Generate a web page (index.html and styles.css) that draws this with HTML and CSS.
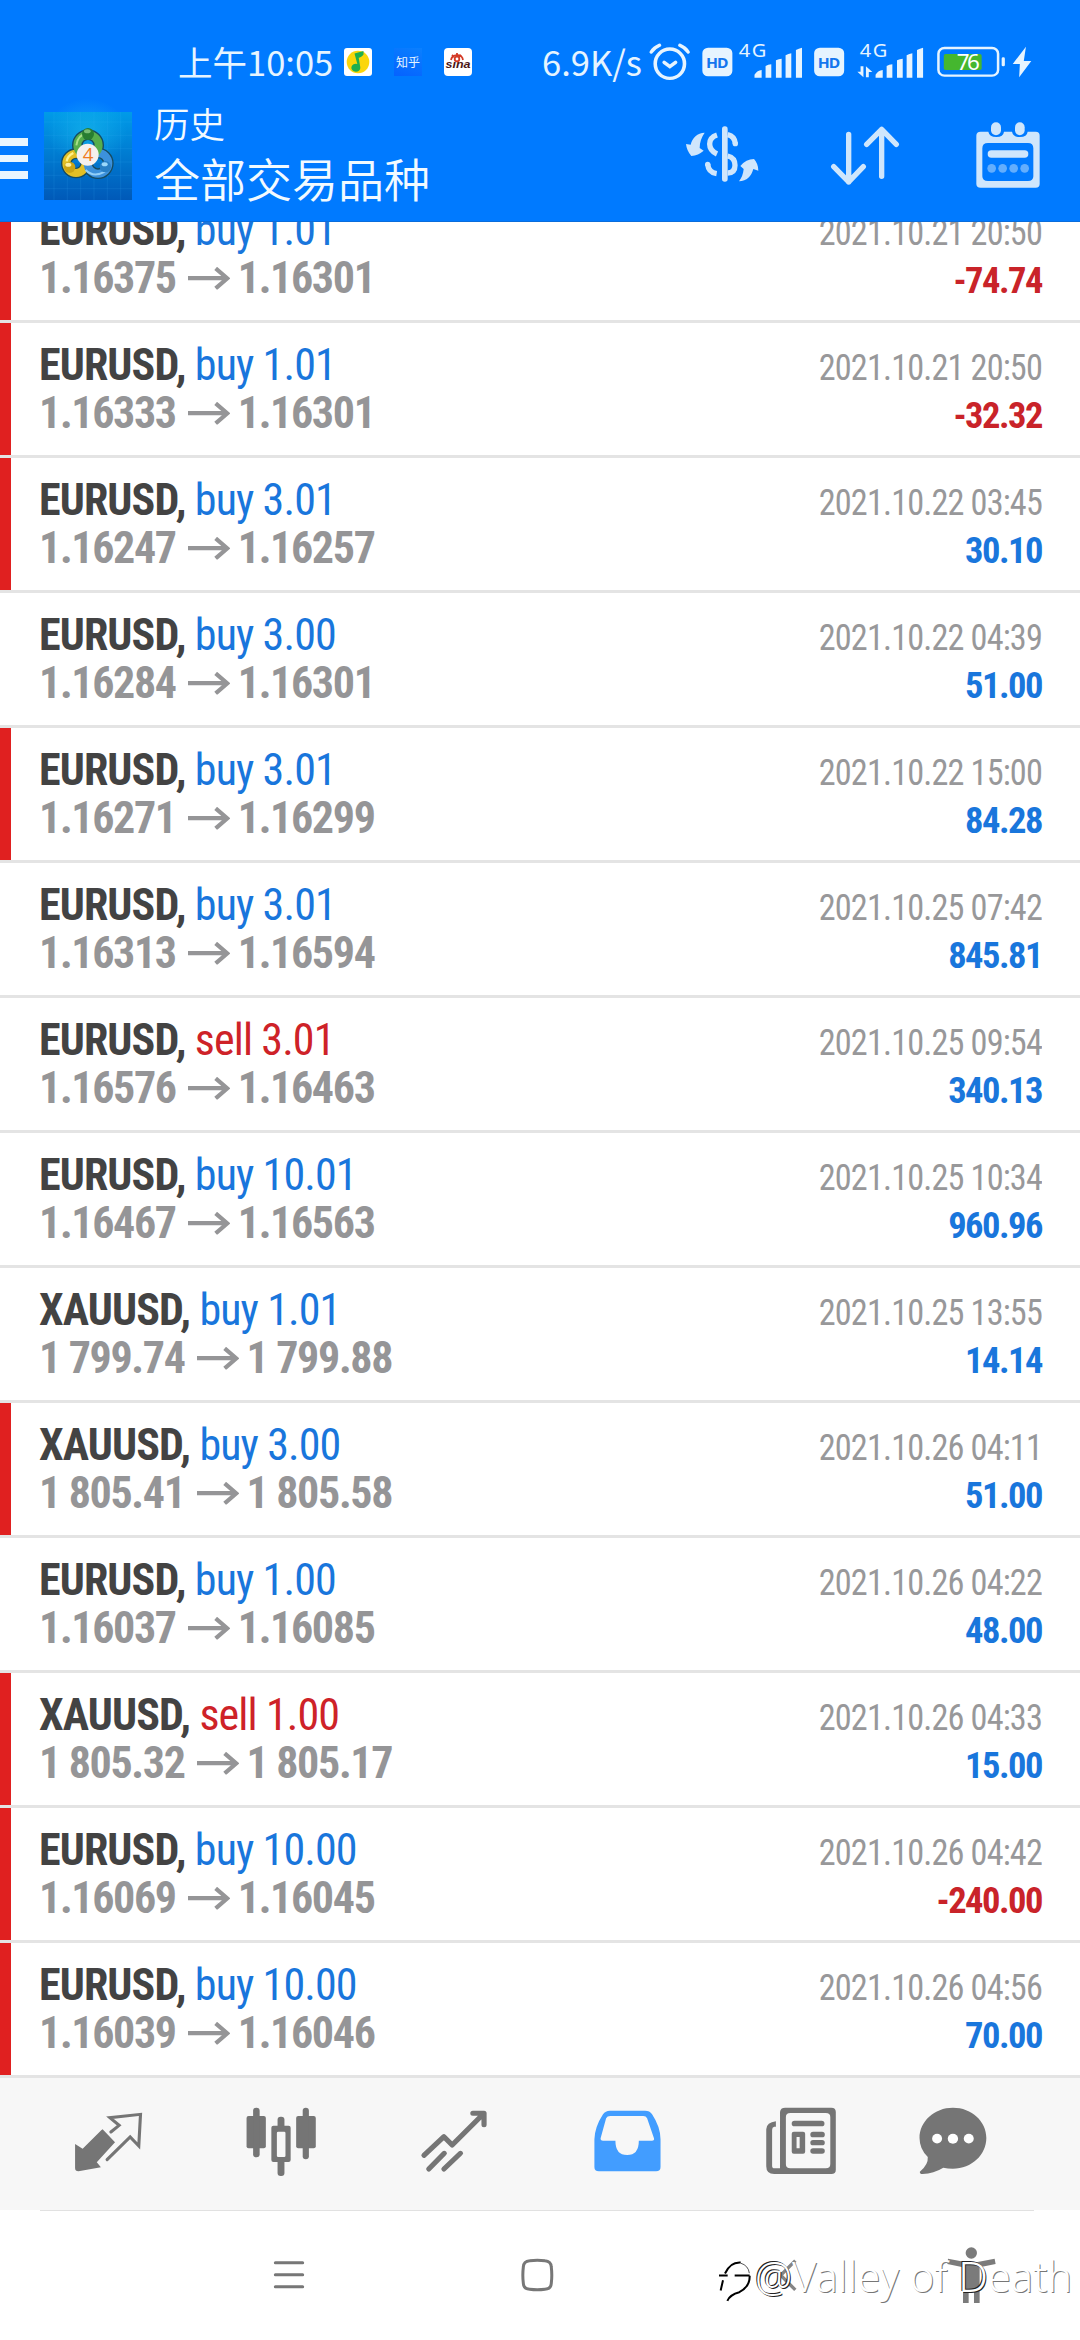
FILE: index.html
```html
<!DOCTYPE html>
<html lang="zh-CN">
<head>
<meta charset="utf-8">
<title>历史</title>
<link rel="stylesheet" href="styles.css">
</head>
<body>
<header class="top">
  <div class="status">
    <span class="clock">上午10:05</span>
    <svg class="app-music" viewBox="0 0 28 28"><rect width="28" height="28" rx="3" fill="#fff"/><circle cx="14" cy="14" r="11.3" fill="#fbd60a"/><path d="M10.500 5.500l9-2.500v3.500c-1 2-3.500 3-4.800 3.200l1.600 9.500a4.500 4 0 1 1-3-3.200z" fill="#1fae4e"/></svg>
    <span class="app-zhihu">知乎</span>
    <span class="app-sina"><svg viewBox="0 0 28 28"><g fill="none" stroke="#d33a26" stroke-width="1.800"><path d="M7 12C8 6 18 5 19 12"/><circle cx="13" cy="11" r="2.300"/><path d="M8 7l2 2M13 5v2M17 7l-2 2"/></g><text x="1.500" y="20" textLength="25" lengthAdjust="spacingAndGlyphs">sına</text></svg></span>
    <span class="speed">6.9K/s</span>
    <svg class="indicators" viewBox="355 0 1090 210" preserveAspectRatio="none">
      <g fill="none" stroke="#e6f4ff" stroke-width="10" stroke-linecap="round"><ellipse cx="419" cy="101" rx="41" ry="44"/><path d="M367 66q8-13 23-20M470 66q-8-13-23-20"/><path d="M403 97l16 13 16-13"/></g>
      <g fill="#e6f4ff">
        <rect x="510" y="53" width="84" height="86" rx="16"/><rect x="823" y="53" width="84" height="86" rx="16"/>
        <g id="bars"><path d="M656 143v-9q8-13 20-14v23zM687 143v-35q7-4 16-5v40zM716 143V91q8-4 16-5v57zM743 143V76q8-5 16-6v73zM772 143V60q8-5 17-7v90z"/></g>
        <use href="#bars" x="339"/>
        <path d="M953 109h8v33l-17-17h9zM968 142v-33l18 17h-10v16z"/>
        <rect x="1348" y="82" width="9" height="27" rx="4"/>
        <path d="M1416 50l-37 52h20l-2 40 34-49h-21z"/>
      </g>
      <rect x="1171" y="54" width="167" height="83" rx="17" fill="none" stroke="#e6f4ff" stroke-width="7"/>
      <rect x="1186" y="72" width="106" height="48" rx="5" fill="#45b72f"/>
      <g class="ind-hd"><text x="520" y="113" textLength="63">HD</text><text x="833" y="113" textLength="63">HD</text></g>
      <g class="ind-net"><text x="612" y="82" textLength="77">4G</text><text x="951" y="82" textLength="77">4G</text></g>
      <text class="ind-battery" x="1222" y="121" textLength="65">76</text>
    </svg>
  </div>
  <div class="toolbar">
    <div class="burger"><i></i><i></i><i></i></div>
    <svg class="logo" viewBox="0 0 264 264">
      <defs>
        <linearGradient id="sky" x1="0" y1="0" x2="0" y2="1"><stop offset="0" stop-color="#009be8"/><stop offset="1" stop-color="#0059b8"/></linearGradient>
        <radialGradient id="halo"><stop offset="0" stop-color="#1cc0f0" stop-opacity=".55"/><stop offset="1" stop-color="#1cc0f0" stop-opacity="0"/></radialGradient>
      </defs>
      <rect width="264" height="264" fill="url(#sky)"/>
      <ellipse cx="130" cy="60" rx="120" ry="100" fill="url(#halo)"/>
      <path d="M30 0v264M70 0v264M110 0v264M150 0v264M190 0v264M230 0v264M0 30h264M0 70h264M0 110h264M0 150h264M0 190h264M0 230h264" stroke="#48b8ff" stroke-opacity=".2" stroke-width="2"/>
      <g fill="none" stroke-width="24">
        <g stroke="#164b60" stroke-width="32"><circle cx="132" cy="100" r="32"/><circle cx="96" cy="154" r="29"/><circle cx="162" cy="154" r="31"/></g>
        <circle cx="96" cy="154" r="29" stroke="#e3bf25"/><circle cx="162" cy="154" r="31" stroke="#3c91dc"/><circle cx="132" cy="100" r="32" stroke="#56ae4c"/>
        <path d="M97 100q4-32 34-37" stroke="#a8df87" stroke-width="6"/><path d="M68 148q2-16 20-25" stroke="#fff18a" stroke-width="7"/><path d="M125 174q23 24 58 5" stroke="#93cff8" stroke-width="6"/>
      </g>
      <circle cx="132" cy="66" r="18" fill="#287d31"/><circle cx="77" cy="166" r="17" fill="#cba414"/><circle cx="184" cy="164" r="17" fill="#287fc5"/>
      <ellipse cx="130" cy="58" rx="10" ry="6" fill="#79bd75"/><ellipse cx="73" cy="158" rx="9" ry="6" fill="#fff0a2"/><ellipse cx="182" cy="157" rx="9" ry="6" fill="#9bd8fb"/>
      <circle cx="131" cy="128" r="33" fill="#f5f0ee"/>
      <text x="116" y="148">4</text>
    </svg>
    <div class="titles"><div class="t1">历史</div><div class="t2">全部交易品种</div></div>
    <svg class="ic-dollar" viewBox="78 78 219 168"><g fill="#cfe6fc"><path d="M134 98C112 99 97 113 92 134L78 132Q80 152 94 168Q115 166 131 152L119 144Q119 119 134 98zM237 244C244 235 250 222 251 207L241 198Q258 177 282 177Q295 191 295 212L280 207C274 229 261 243 237 244z"/><rect x="186" y="79" width="17" height="166" rx="8"/></g><path d="M171 105Q149 112 149 132T171 162M143 192Q145 217 170 221M203 104Q224 109 226 131M203 168Q225 173 225 196T203 219" fill="none" stroke="#cfe6fc" stroke-width="16"/><circle cx="226" cy="131" r="8" fill="#cfe6fc"/><circle cx="143" cy="193" r="8" fill="#cfe6fc"/></svg>
    <svg class="ic-sort" viewBox="513 78 204 178"><path d="M566 103V246M521 200L566 246L610 200M665 229V88M620 133L665 88L709 133" fill="none" stroke="#cfe6fc" stroke-width="16" stroke-linecap="round" stroke-linejoin="round"/></svg>
    <svg class="ic-cal" viewBox="948 66 192 198"><path fill-rule="evenodd" fill="#cfe6fc" d="M962 95H985Q988 111 1009 111T1032 95H1056Q1059 111 1080 111T1103 95H1127Q1139 95 1139 107V252Q1139 263 1127 263H962Q949 263 949 252V107Q949 95 962 95zM984 129Q967 129 967 145V229Q967 243 984 243H1104Q1120 243 1120 229V145Q1120 129 1104 129z"/><g fill="#cfe6fc"><rect x="993" y="67" width="30" height="39" rx="15"/><rect x="1065" y="67" width="29" height="39" rx="15"/><rect x="983" y="151" width="122" height="22" rx="11"/></g><g fill="#63aefd"><circle cx="995" cy="205" r="13"/><circle cx="1028" cy="205" r="13"/><circle cx="1061" cy="205" r="13"/><circle cx="1094" cy="205" r="13"/></g></svg>
  </div>
</header>

<svg class="defs"><symbol id="arrow" viewBox="0 0 126 68"><path d="M0 33.500H118M83 4L118 34L83 64" fill="none" stroke="#959597" stroke-width="12.500"/></symbol></svg>

<main class="list">
  <div class="row red"><div class="deal"><p><b>EURUSD,</b> <span class="buy">buy 1.01</span></p><p class="price">1.16375<svg><use href="#arrow"/></svg>1.16301</p></div><div class="result"><time>2021.10.21 20:50</time><b class="loss">-74.74</b></div></div>
  <div class="row red"><div class="deal"><p><b>EURUSD,</b> <span class="buy">buy 1.01</span></p><p class="price">1.16333<svg><use href="#arrow"/></svg>1.16301</p></div><div class="result"><time>2021.10.21 20:50</time><b class="loss">-32.32</b></div></div>
  <div class="row red"><div class="deal"><p><b>EURUSD,</b> <span class="buy">buy 3.01</span></p><p class="price">1.16247<svg><use href="#arrow"/></svg>1.16257</p></div><div class="result"><time>2021.10.22 03:45</time><b>30.10</b></div></div>
  <div class="row"><div class="deal"><p><b>EURUSD,</b> <span class="buy">buy 3.00</span></p><p class="price">1.16284<svg><use href="#arrow"/></svg>1.16301</p></div><div class="result"><time>2021.10.22 04:39</time><b>51.00</b></div></div>
  <div class="row red"><div class="deal"><p><b>EURUSD,</b> <span class="buy">buy 3.01</span></p><p class="price">1.16271<svg><use href="#arrow"/></svg>1.16299</p></div><div class="result"><time>2021.10.22 15:00</time><b>84.28</b></div></div>
  <div class="row"><div class="deal"><p><b>EURUSD,</b> <span class="buy">buy 3.01</span></p><p class="price">1.16313<svg><use href="#arrow"/></svg>1.16594</p></div><div class="result"><time>2021.10.25 07:42</time><b>845.81</b></div></div>
  <div class="row"><div class="deal"><p><b>EURUSD,</b> <span class="sell">sell 3.01</span></p><p class="price">1.16576<svg><use href="#arrow"/></svg>1.16463</p></div><div class="result"><time>2021.10.25 09:54</time><b>340.13</b></div></div>
  <div class="row"><div class="deal"><p><b>EURUSD,</b> <span class="buy">buy 10.01</span></p><p class="price">1.16467<svg><use href="#arrow"/></svg>1.16563</p></div><div class="result"><time>2021.10.25 10:34</time><b>960.96</b></div></div>
  <div class="row"><div class="deal"><p><b>XAUUSD,</b> <span class="buy">buy 1.01</span></p><p class="price">1 799.74<svg><use href="#arrow"/></svg>1 799.88</p></div><div class="result"><time>2021.10.25 13:55</time><b>14.14</b></div></div>
  <div class="row red"><div class="deal"><p><b>XAUUSD,</b> <span class="buy">buy 3.00</span></p><p class="price">1 805.41<svg><use href="#arrow"/></svg>1 805.58</p></div><div class="result"><time>2021.10.26 04:11</time><b>51.00</b></div></div>
  <div class="row"><div class="deal"><p><b>EURUSD,</b> <span class="buy">buy 1.00</span></p><p class="price">1.16037<svg><use href="#arrow"/></svg>1.16085</p></div><div class="result"><time>2021.10.26 04:22</time><b>48.00</b></div></div>
  <div class="row red"><div class="deal"><p><b>XAUUSD,</b> <span class="sell">sell 1.00</span></p><p class="price">1 805.32<svg><use href="#arrow"/></svg>1 805.17</p></div><div class="result"><time>2021.10.26 04:33</time><b>15.00</b></div></div>
  <div class="row red"><div class="deal"><p><b>EURUSD,</b> <span class="buy">buy 10.00</span></p><p class="price">1.16069<svg><use href="#arrow"/></svg>1.16045</p></div><div class="result"><time>2021.10.26 04:42</time><b class="loss">-240.00</b></div></div>
  <div class="row red"><div class="deal"><p><b>EURUSD,</b> <span class="buy">buy 10.00</span></p><p class="price">1.16039<svg><use href="#arrow"/></svg>1.16046</p></div><div class="result"><time>2021.10.26 04:56</time><b>70.00</b></div></div>
</main>

<nav class="tabs">
  <svg viewBox="0 54 522.7 396" preserveAspectRatio="none"><path fill="#757575" d="M298 208L334 247L281 307L293 322L228 334Q218 334 218 324V252L240 266L294 211z"/><path d="M322 216L346 196L319 173L408 163L403 258L378 231L311 299" fill="none" stroke="#757575" stroke-width="9" stroke-linecap="round"/></svg>
  <svg viewBox="522.7 54 522.7 396" preserveAspectRatio="none"><g fill="#757575"><rect x="716" y="168" width="56" height="97" rx="6"/><rect x="735" y="143" width="19" height="149" rx="9"/><rect x="860" y="168" width="57" height="97" rx="6"/><rect x="879" y="143" width="18" height="155" rx="9"/><rect x="806" y="170" width="20" height="36" rx="9"/><rect x="806" y="296" width="20" height="52" rx="9"/><path fill-rule="evenodd" d="M794 197h44q6 0 6 6v97q0 6-6 6h-44q-6 0-6-6v-97q0-6 6-6zM808 215q-4 0-4 4v68q0 4 4 4h17q4 0 4-4v-68q0-4-4-4z"/></g></svg>
  <svg viewBox="1045.3 54 522.7 396" preserveAspectRatio="none"><path d="M1231 286L1289 230L1313 255L1404 161M1373 159.500H1405.500V194M1245 327L1290 280M1289 327L1337 280" fill="none" stroke="#757575" stroke-width="15" stroke-linecap="round" stroke-linejoin="round"/></svg>
  <svg viewBox="0 54 522.7 396" preserveAspectRatio="none"><path fill-rule="evenodd" fill="#429dff" d="M203 152H305Q319 152 325 162Q350 201 350 238V321Q350 334 337 334H171Q158 334 158 321V238Q159 201 183 163Q190 152 203 152zM204 168Q195 168 192 175L176 235Q175 242 183 242H219Q219 285 253 285T287 242H325Q333 242 331 235L311 175Q308 168 300 168z"/></svg>
  <svg viewBox="522.7 54 522.7 396" preserveAspectRatio="none"><g fill="#757575"><path fill-rule="evenodd" d="M712 143H846Q859 143 859 156V329Q859 342 846 342H680Q657 342 657 319V208Q658 187 685 184V200H680Q674 201 674 210V317Q674 325 681 325H697V156Q698 143 712 143zM727 159Q714 159 714 171V312Q714 325 727 325H830Q843 325 843 312V171Q843 159 830 159z"/><rect x="731" y="182" width="95" height="17" rx="8"/><path fill-rule="evenodd" d="M737 215H764Q770 215 770 221V275Q770 281 764 281H737Q731 281 731 275V221Q731 215 737 215zM745 231V265H754V231z"/><rect x="785" y="215" width="42" height="17" rx="8"/><rect x="785" y="240" width="42" height="16" rx="8"/><rect x="785" y="265" width="42" height="16" rx="8"/></g></svg>
  <svg viewBox="1045.3 54 522.7 396" preserveAspectRatio="none"><path fill="#757575" d="M1199 143C1254 143 1296 184 1296 234S1254 326 1199 326Q1184 326 1171 323Q1143 341 1111 342Q1102 342 1103 335Q1128 314 1126 291Q1102 267 1102 234C1102 184 1145 143 1199 143z"/><g fill="#fff"><circle cx="1153" cy="236" r="14.500"/><circle cx="1199" cy="236" r="15"/><circle cx="1245" cy="236" r="14.500"/></g></svg>
</nav>

<footer class="sysnav">
  <svg class="sys-menu" viewBox="222 183 90 84"><path d="M226 188H308M226 224H308M226 260H308" stroke="#777" stroke-width="9" stroke-linecap="round"/></svg>
  <svg class="sys-home" viewBox="962 176 97 97"><path d="M988 181Q1011 178 1034 181Q1052 182 1053 200Q1056 225 1053 249Q1052 266 1034 267Q1011 270 988 267Q970 266 969 249Q966 225 969 200Q970 182 988 181z" fill="none" stroke="#777" stroke-width="9"/></svg>
  <svg class="sys-back" viewBox="298 176 54 98"><path d="M347 181L303 225L347 269" fill="none" stroke="#858585" stroke-width="10"/></svg>
  <svg class="sys-person" viewBox="803 140 148 170"><g fill="#7b7b7b"><circle cx="876" cy="158" r="17"/><path d="M806 175L858 185H895L946 175L949 191L901 201V308H884V272H868V308H851V201L804 191z"/></g></svg>
  <div class="mark"><svg viewBox="115 185 105 125"><g fill="none" stroke="#000" stroke-width="6"><path d="M136 225Q152 190 183 192M118 231H144M130 245L123 276M165 231H210M210 232Q211 264 179 281Q151 288 143 307"/><path d="M183 194Q206 201 209 224" stroke-width="2"/></g></svg><span class="at">@</span><span>Valley of </span><span class="at">D</span><span>eath</span></div>
</footer>
</body>
</html>
```
FILE: styles.css
```css
* { box-sizing: border-box; margin: 0; padding: 0; }
body { width: 1080px; height: 2340px; overflow: hidden; background: #fff; display: flex; flex-direction: column; font-family: "Roboto Condensed", Roboto, sans-serif; }
svg { display: block; flex: none; overflow: visible; }
.defs { display: none; }

.top { flex: none; height: 222px; background: #007aff; border-bottom: 1px solid #0a6ddb; color: #f2faff; font-family: "Noto Sans CJK SC", sans-serif; position: relative; z-index: 1; }
.status { height: 95px; padding-left: 178px; display: flex; align-items: flex-start; font-size: 34.500px; line-height: 50px; color: #e6f4ff; white-space: nowrap; }
.clock { width: 166px; margin-top: 36px; }
.app-music { width: 28px; height: 28px; margin-top: 48px; }
.app-zhihu { margin: 48px 0 0 22px; width: 28px; height: 28px; line-height: 27px; font-size: 12px; text-align: center; background: linear-gradient(20deg, #0562ff, #0a80ff); }
.app-sina { margin: 48px 0 0 22px; width: 28px; height: 28px; border-radius: 4px; background: #fff; }
.app-sina text { font: italic bold 11px "Liberation Sans", sans-serif; fill: #4a1515; }
.speed { margin: 36px 0 0 70px; width: 105px; }
.indicators { width: 389.3px; height: 70px; margin: 30px 0 0 0; }
.ind-hd { font: bold 44px "Noto Sans", sans-serif; fill: #1476ee; }
.ind-net { font: 56px "Noto Sans", sans-serif; fill: #e6f4ff; }
.ind-battery { font: 63px "Noto Sans", sans-serif; fill: #fff; }

.toolbar { height: 126px; display: flex; }
.burger { width: 28px; padding-top: 43px; display: flex; flex-direction: column; gap: 9px; }
.burger i { height: 7.5px; background: #e9f6ff; }
.logo { width: 88px; height: 88px; margin: 17px 0 0 16px; }
.logo text { font: 56px "Open Sans", sans-serif; fill: #f07b22; }
.titles { width: 531px; padding-left: 22px; font-weight: 350; white-space: nowrap; }
.t1 { font-size: 35.500px; line-height: 44px; padding-top: 6px; }
.t2 { font-size: 46px; line-height: 56px; padding-top: 4px; height: 60px; }
.ic-dollar { width: 73px; height: 56px; margin: 31px 0 0 23px; }
.ic-sort { width: 68px; height: 59.3px; margin: 31px 0 0 72px; }
.ic-cal { width: 64px; height: 66px; margin: 27px 0 0 77px; }

.list { flex: none; height: 1856px; display: flex; flex-direction: column; justify-content: flex-end; overflow: hidden; }
.row { flex: none; height: 135px; border-bottom: 3px solid #e4e4e4; padding: 18px 38px 0 39px; display: flex; justify-content: space-between; white-space: nowrap; }
.row.red { background: linear-gradient(#e02020, #e02020) no-repeat 0 0 / 11px 132px; }
.deal { font-size: 44px; line-height: 48px; font-stretch: 75%; letter-spacing: -.9px; }
.deal b { color: #434343; }
.buy { color: #1976dc; }
.sell { color: #ce2228; }
.price { color: #959597; font-weight: 700; display: flex; letter-spacing: -1.35px; }
.price svg { width: 42px; height: 22.7px; margin: 13px 8px 0 12px; }
.result { display: flex; flex-direction: column; align-items: flex-end; padding-top: 3px; font-size: 36.5px; line-height: 48px; font-stretch: 75%; }
.result time { color: #98989a; letter-spacing: -.9px; transform: scaleX(.938); transform-origin: right; }
.result b { color: #1976dc; letter-spacing: -1.5px; }
.result .loss { color: #c92329; }

.tabs { flex: none; height: 132px; background: #f7f7f7; display: grid; grid-template-columns: repeat(6, 1fr); }
.tabs svg { width: 180px; height: 132px; }

.sysnav { height: 130px; position: relative; display: flex; align-items: flex-start; padding-left: 274px; background: linear-gradient(#e1e1e1, #e1e1e1) no-repeat 40px 0 / 994px 1px; }
.sys-menu { width: 30px; height: 28px; margin-top: 51px; }
.sys-home { width: 32.300px; height: 32.300px; margin: 49px 0 0 217px; }
.sys-back { width: 18px; height: 32.600px; margin: 49px 0 0 226px; }
.sys-person { width: 49.300px; height: 56.600px; margin: 37px 0 0 150px; }
.mark { position: absolute; left: 718px; top: 38px; display: flex; align-items: center; white-space: pre; color: #fff; font: 300 41.700px/56px "Noto Sans", sans-serif; text-shadow: 1px 1px 0 #777; }
.mark svg { width: 35px; height: 42px; margin: 10px 2px 0 0; }
.mark .at { text-shadow: -1px -1px 0 #222, 1px 1px 0 #222; }
```
